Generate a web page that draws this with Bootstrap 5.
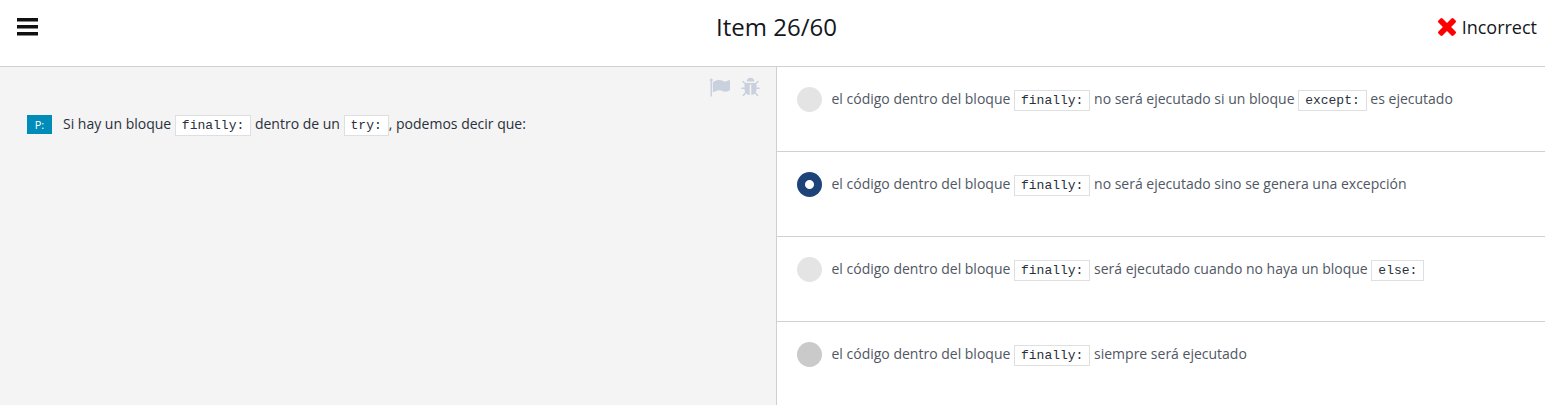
<!DOCTYPE html>
<html lang="es">
<head>
<meta charset="utf-8">
<meta name="viewport" content="width=device-width, initial-scale=1">
<title>Item 26/60</title>
<link href="https://cdn.jsdelivr.net/npm/bootstrap@5.3.0/dist/css/bootstrap.min.css" rel="stylesheet">
<style>
  body { font-family: "Open Sans", sans-serif; font-size: 14px; line-height: 24px; color: #29303b; }
  .quiz-header { display: grid; grid-template-columns: 1fr auto 1fr; height: 67px; padding: 0 8px 13px 16px; border-bottom: 1px solid #d0d0d0; color: #14171c; }
  .quiz-title { font-size: 24px; line-height: 32px; font-weight: 400; }
  .quiz-status { font-size: 18px; gap: 6px; }
  .question-pane { flex: 0 0 calc(50% + 4px); background: #f4f4f4; border-right: 1px solid #d0d0d0; padding: 10px 15px 24px 27px; }
  .tools { gap: 10px; }
  .tool-btn { color: #cad1de; line-height: 0; }
  .question-tag { width: 25px; height: 19px; background: #008cb8; color: #fff; font-size: 11px; line-height: 19px; margin-top: 3px; }
  .question-row { margin-top: 14px; gap: 11px; }
  .code-chip { font-family: "Liberation Mono", "Courier New", monospace; font-size: 13px; line-height: 18px; color: #29303b; background: #fff; border: 1px solid #dedfe0; padding: 2px 6px; }
  .answer { min-height: 85px; padding: 20px; gap: 10px; border-bottom: 1px solid #d0d0d0; color: #505763; }
  .answer:last-child { border-bottom: 0; }
  .answer-radio.form-check-input { width: 25px; height: 25px; margin: 0; border: 0; background: #e4e4e4; box-shadow: none; }
  .answer-radio.form-check-input:checked { background: radial-gradient(circle, #fff 4px, #1e4379 5px); }
  .answer:last-child .answer-radio { background: #cacaca; }
</style>
</head>
<body>
<div class="d-flex flex-column min-vh-100">
  <header class="quiz-header align-items-center">
    <button type="button" class="btn p-0 border-0 lh-1 text-start" aria-label="Menú">
      <svg width="22" height="18" viewBox="0 0 22 18" fill="#111" aria-hidden="true"><rect x="1" width="21" height="3.500"/><rect x="1" y="7" width="21" height="3.500"/><rect x="1" y="14" width="21" height="3.500"/></svg>
    </button>
    <h1 class="quiz-title m-0">Item 26/60</h1>
    <div class="quiz-status d-flex align-items-center justify-content-end">
      <svg width="18" height="18" viewBox="302 366 1188 1188" fill="#f00" aria-hidden="true"><path d="M1490 1322q0 40-28 68l-136 136q-28 28-68 28t-68-28l-294-294-294 294q-28 28-68 28t-68-28l-136-136q-28-28-28-68t28-68l294-294-294-294q-28-28-28-68t28-68l136-136q28-28 68-28t68 28l294 294 294-294q28-28 68-28t68 28l136 136q28 28 28 68t-28 68l-294 294 294 294q28 28 28 68z"/></svg>
      <span>Incorrect</span>
    </div>
  </header>
  <main class="d-flex flex-grow-1">
    <section class="question-pane">
      <div class="tools d-flex justify-content-end">
        <button type="button" class="btn p-0 border-0 tool-btn" aria-label="Marcar">
          <svg width="21" height="21" viewBox="0 0 1792 1792" fill="currentColor" aria-hidden="true"><path d="M320 256q0 72-64 110v1266q0 13-9.500 22.500t-22.500 9.500h-64q-13 0-22.500-9.500t-9.500-22.500v-1266q-64-38-64-110 0-53 37.500-90.500t90.500-37.500 90.500 37.500 37.500 90.500zm1472 64v763q0 25-12.500 38.500t-39.500 27.500q-215 116-369 116-61 0-123.500-22t-108.500-48-115.500-48-142.500-22q-192 0-464 146-17 9-33 9-26 0-45-19t-19-45v-742q0-32 31-55 21-14 79-43 236-120 421-120 107 0 200 29t219 88q38 19 88 19 54 0 117.500-21t110-47 88-47 54.500-21q26 0 45 19t19 45z"/></svg>
        </button>
        <button type="button" class="btn p-0 border-0 tool-btn" aria-label="Informar de un error">
          <svg width="21" height="21" viewBox="0 0 1792 1792" fill="currentColor" aria-hidden="true"><path d="M1696 960q0 26-19 45t-45 19h-224q0 171-67 290l208 209q19 19 19 45t-19 45q-18 19-45 19t-45-19l-198-197q-5 5-15 13t-42 28.500-65 36.500-82 29-97 13v-896h-128v896q-51 0-101.500-13.500t-87-33-66-39-43.500-32.500l-15-14-183 207q-20 21-48 21-24 0-43-16-19-18-20.500-44.500t15.500-46.500l202-227q-58-114-58-274h-224q-26 0-45-19t-19-45 19-45 45-19h224v-294l-173-173q-19-19-19-45t19-45 45-19 45 19l173 173h844l173-173q19-19 45-19t45 19 19 45-19 45l-173 173v294h224q26 0 45 19t19 45zm-480-576h-640q0-133 93.500-226.500t226.500-93.500 226.500 93.500 93.500 226.500z"/></svg>
        </button>
      </div>
      <div class="question-row d-flex align-items-start">
        <span class="question-tag text-center flex-shrink-0">P:</span>
        <p class="m-0">Si hay un bloque <code class="code-chip">finally:</code> dentro de un <code class="code-chip">try:</code>, podemos decir que:</p>
      </div>
    </section>
    <section class="flex-fill">
      <div class="answer d-flex align-items-start">
        <input class="form-check-input answer-radio flex-shrink-0" type="radio" name="answer" id="a1">
        <label for="a1">el código dentro del bloque <code class="code-chip">finally:</code> no será ejecutado si un bloque <code class="code-chip">except:</code> es ejecutado</label>
      </div>
      <div class="answer d-flex align-items-start">
        <input class="form-check-input answer-radio flex-shrink-0" type="radio" name="answer" id="a2" checked>
        <label for="a2">el código dentro del bloque <code class="code-chip">finally:</code> no será ejecutado sino se genera una excepción</label>
      </div>
      <div class="answer d-flex align-items-start">
        <input class="form-check-input answer-radio flex-shrink-0" type="radio" name="answer" id="a3">
        <label for="a3">el código dentro del bloque <code class="code-chip">finally:</code> será ejecutado cuando no haya un bloque <code class="code-chip">else:</code></label>
      </div>
      <div class="answer d-flex align-items-start">
        <input class="form-check-input answer-radio flex-shrink-0" type="radio" name="answer" id="a4">
        <label for="a4">el código dentro del bloque <code class="code-chip">finally:</code> siempre será ejecutado</label>
      </div>
    </section>
  </main>
</div>
<script src="https://cdn.jsdelivr.net/npm/bootstrap@5.3.0/dist/js/bootstrap.bundle.min.js"></script>
</body>
</html>
